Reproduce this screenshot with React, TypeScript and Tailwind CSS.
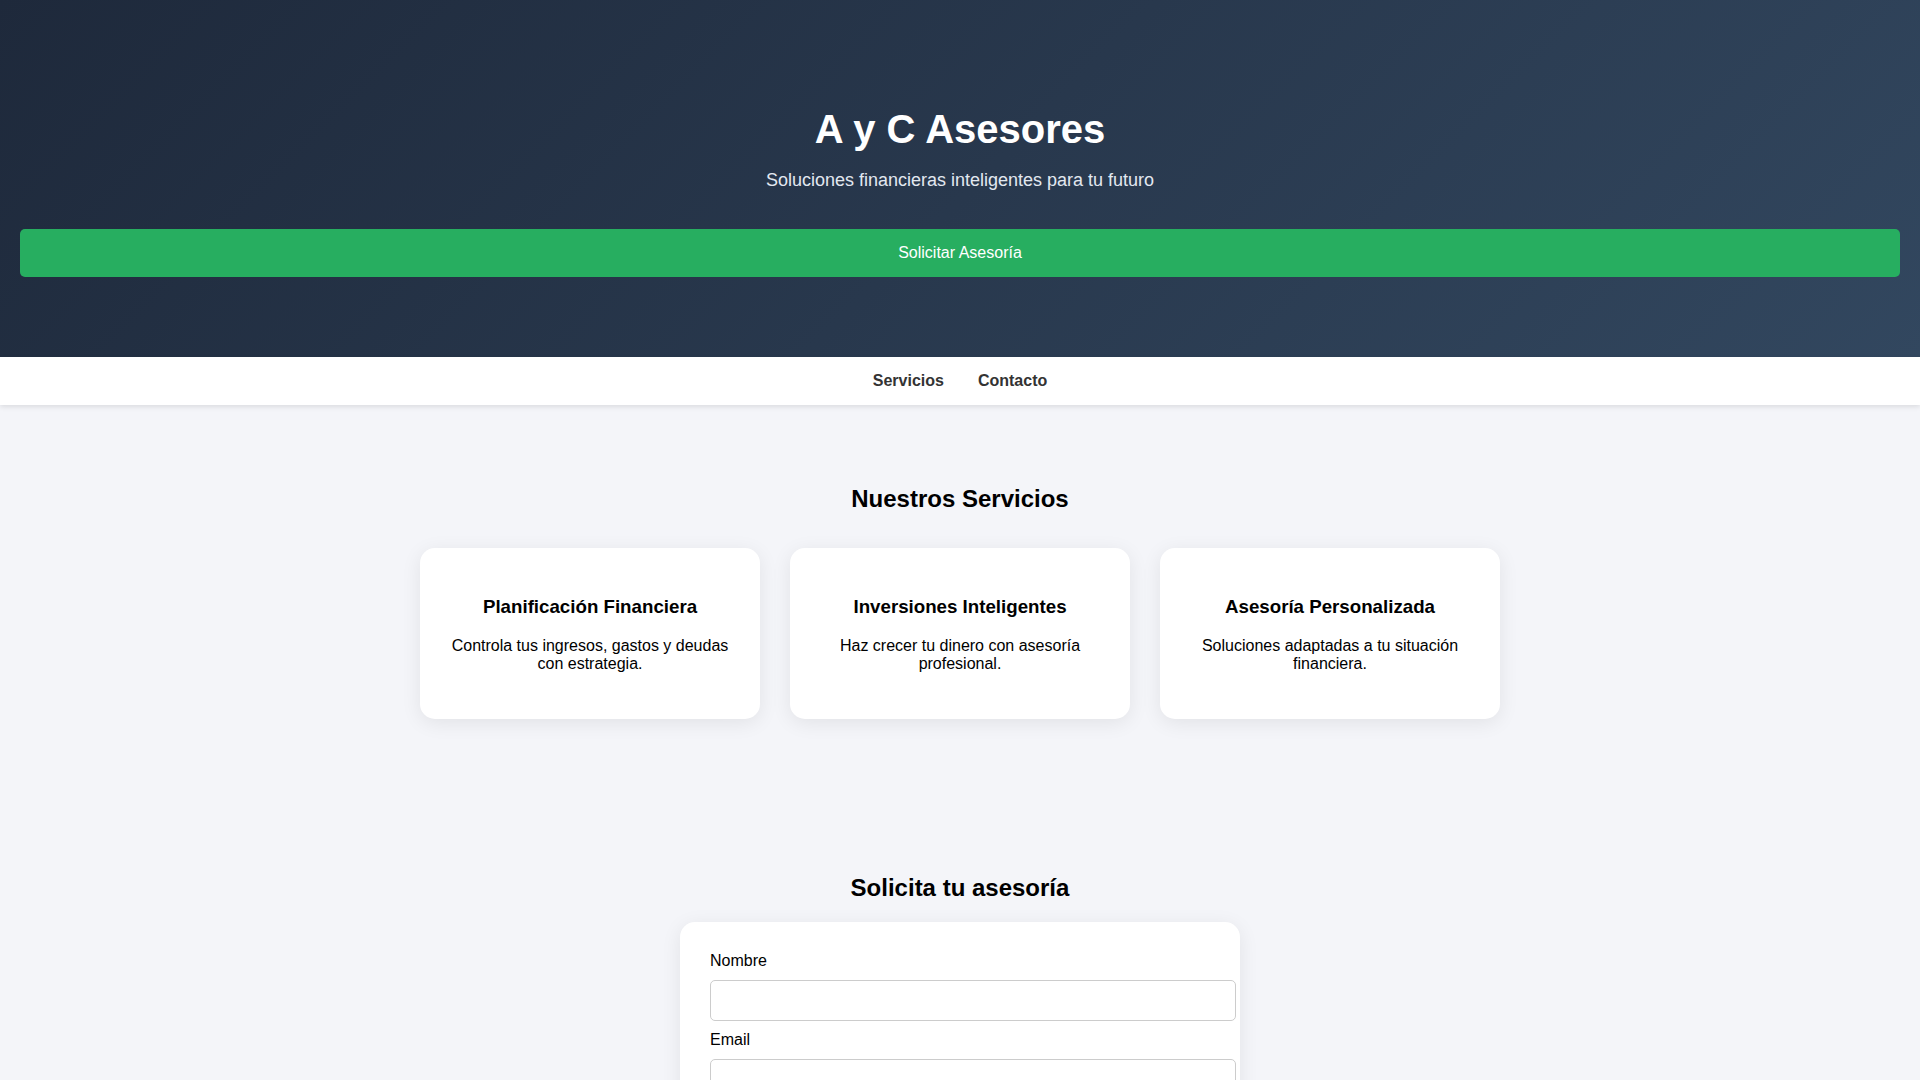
import React from "react";

const services = [
  {
    title: "Planificación Financiera",
    text: "Controla tus ingresos, gastos y deudas con estrategia.",
  },
  {
    title: "Inversiones Inteligentes",
    text: "Haz crecer tu dinero con asesoría profesional.",
  },
  {
    title: "Asesoría Personalizada",
    text: "Soluciones adaptadas a tu situación financiera.",
  },
];

function ServiceCard({ title, text }: { title: string; text: string }) {
  return (
    <div className="rounded-[15px] bg-white p-[30px] text-center shadow-[0_4px_20px_rgba(0,0,0,0.08)]">
      <h3 className="mt-[17.7px] text-[18.72px] font-bold leading-[21.5px]">{title}</h3>
      <p className="mt-[19.8px] mb-[15px] text-[16px] leading-[18.4px]">{text}</p>
    </div>
  );
}

export default function App() {
  return (
    <div className="min-h-screen bg-[#f4f5f9] font-['Liberation_Sans',Arial,sans-serif] text-black">
      <header className="bg-linear-135 from-[#1e293b] to-[#32475f] px-[20px] pt-[80px] pb-[80px] text-center text-white">
        <h1 className="mt-[25.6px] text-[40px] font-bold leading-[46px]">A y C Asesores</h1>
        <p className="mt-[18px] text-[18px] leading-[21px] text-[#e2e8f0]">
          Soluciones financieras inteligentes para tu futuro
        </p>
        <button className="mt-[38.4px] h-[48px] w-full rounded-[5px] bg-[#27ae60] text-[16px] text-white">
          Solicitar Asesoría
        </button>
      </header>

      <nav className="flex h-[48px] items-center justify-center gap-[34px] bg-white text-[16px] font-bold text-[#333] shadow-[0_2px_5px_rgba(0,0,0,0.1)]">
        <a href="#servicios">Servicios</a>
        <a href="#contacto">Contacto</a>
      </nav>

      <section id="servicios" className="pt-[80px]">
        <h2 className="text-center text-[24px] font-bold leading-[28px]">Nuestros Servicios</h2>
        <div className="mx-auto mt-[35px] grid w-[1080px] grid-cols-3 gap-[30px]">
          {services.map((s) => (
            <ServiceCard key={s.title} title={s.title} text={s.text} />
          ))}
        </div>
      </section>

      <section id="contacto" className="pb-[60px]">
        <h2 className="mt-[155px] text-center text-[24px] font-bold leading-[28px]">Solicita tu asesoría</h2>
        <form className="mx-auto mt-[20px] w-[560px] rounded-[15px] bg-white p-[30px] shadow-[0_4px_20px_rgba(0,0,0,0.08)]">
          <label className="mb-[10px] block text-[16px] leading-[18.4px]">Nombre</label>
          <input
            type="text"
            className="mb-[10px] box-content block h-[18.6px] w-full rounded-[5px] border border-[#ccc] px-[12px] py-[10px] text-[16px]"
          />
          <label className="mb-[10px] block text-[16px] leading-[18.4px]">Email</label>
          <input
            type="email"
            className="mb-[10px] box-content block h-[18.6px] w-full rounded-[5px] border border-[#ccc] px-[12px] py-[10px] text-[16px]"
          />
          <label className="mb-[10px] block text-[16px] leading-[18.4px]">Mensaje</label>
          <textarea
            rows={4}
            className="mb-[10px] box-content block w-full rounded-[5px] border border-[#ccc] px-[12px] py-[10px] text-[16px]"
          />
          <button
            type="button"
            className="mt-[10px] h-[44px] w-full rounded-[5px] bg-[#27ae60] text-[16px] text-white"
          >
            Enviar
          </button>
        </form>
      </section>

      <footer className="bg-[#1e293b] py-[20px] text-center text-[14px] text-[#cbd5e1]">
        © 2024 A y C Asesores
      </footer>
    </div>
  );
}
